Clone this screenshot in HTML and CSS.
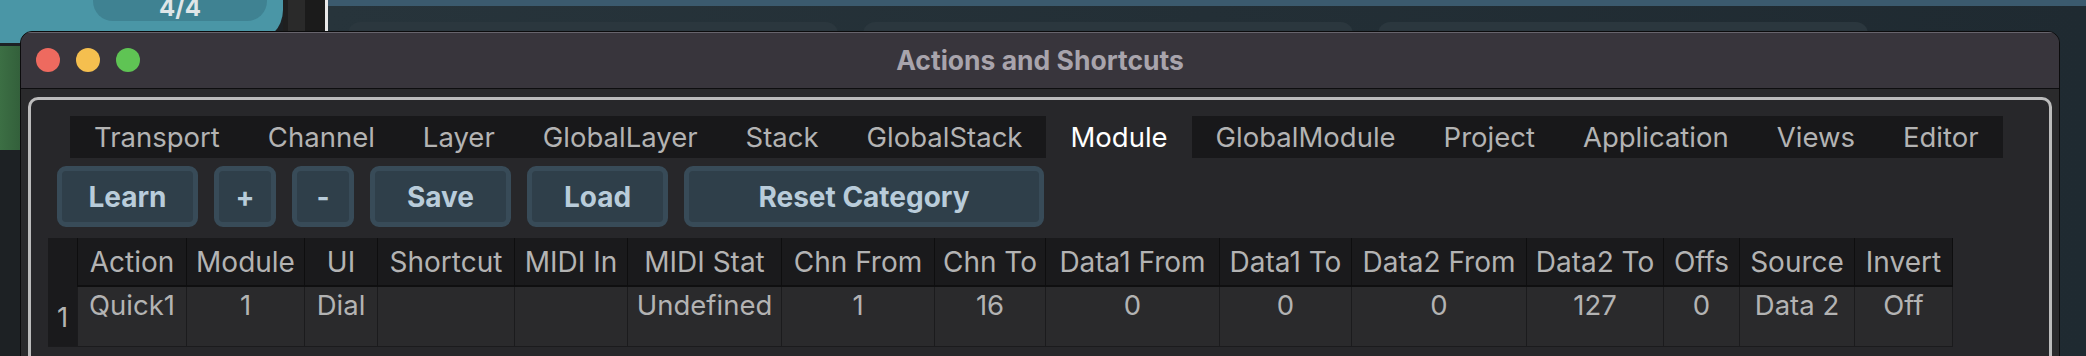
FILE: index.html
```html
<!DOCTYPE html>
<html lang="en">
<head>
  <meta charset="UTF-8">
  <title>Actions and Shortcuts</title>
  <link rel="stylesheet" href="styles.css">
</head>
<body>
  <div class="app">
    <aside class="side">
      <div class="meter"><div class="pill">4/4</div></div>
      <div class="track"></div>
    </aside>
    <div class="rail">
      <div class="rail-a"></div>
      <div class="rail-b"></div>
      <div class="rail-c"></div>
      <div class="rail-d"></div>
    </div>
    <main class="stage">
      <div class="stage-top"></div>
      <div class="cards">
        <div class="card"></div>
        <div class="card"></div>
        <div class="card"></div>
      </div>
    </main>
  </div>

  <div class="window">
    <div class="titlebar">
      <div class="lights">
        <span class="light red"></span>
        <span class="light yellow"></span>
        <span class="light green"></span>
      </div>
      <div class="title">Actions and Shortcuts</div>
      <div></div>
    </div>

    <div class="body">
      <div class="panel">
        <nav class="tabs">
          <span class="tab">Transport</span>
          <span class="tab">Channel</span>
          <span class="tab">Layer</span>
          <span class="tab">GlobalLayer</span>
          <span class="tab">Stack</span>
          <span class="tab">GlobalStack</span>
          <span class="tab active">Module</span>
          <span class="tab">GlobalModule</span>
          <span class="tab">Project</span>
          <span class="tab">Application</span>
          <span class="tab">Views</span>
          <span class="tab">Editor</span>
        </nav>

        <div class="toolbar">
          <button class="btn">Learn</button>
          <button class="btn small">+</button>
          <button class="btn small">-</button>
          <button class="btn">Save</button>
          <button class="btn">Load</button>
          <button class="btn wide">Reset Category</button>
        </div>

        <div class="sheet">
          <div class="th corner"></div>
          <div class="th">Action</div>
          <div class="th">Module</div>
          <div class="th">UI</div>
          <div class="th">Shortcut</div>
          <div class="th">MIDI In</div>
          <div class="th">MIDI Stat</div>
          <div class="th">Chn From</div>
          <div class="th">Chn To</div>
          <div class="th">Data1 From</div>
          <div class="th">Data1 To</div>
          <div class="th">Data2 From</div>
          <div class="th">Data2 To</div>
          <div class="th">Offs</div>
          <div class="th">Source</div>
          <div class="th">Invert</div>

          <div class="td rownum">1</div>
          <div class="td">Quick1</div>
          <div class="td">1</div>
          <div class="td">Dial</div>
          <div class="td"></div>
          <div class="td"></div>
          <div class="td">Undefined</div>
          <div class="td">1</div>
          <div class="td">16</div>
          <div class="td">0</div>
          <div class="td">0</div>
          <div class="td">0</div>
          <div class="td">127</div>
          <div class="td">0</div>
          <div class="td">Data 2</div>
          <div class="td">Off</div>
        </div>
      </div>
    </div>
  </div>
</body>
</html>
```

FILE: styles.css
```css
* {
  box-sizing: border-box;
}

body {
  margin: 0;
  width: 2086px;
  height: 356px;
  overflow: hidden;
  background-color: #1d2429;
  font-family: "Inter", "Liberation Sans", sans-serif;
  position: relative;
}

/* background app */
.app {
  display: flex;
  height: 356px;
}

.side {
  width: 283px;
  background-color: #1d2124;
}

.meter {
  height: 43px;
  background-color: #4a96a6;
  border-bottom-right-radius: 33px;
  padding-left: 93px;
}

.pill {
  width: 174px;
  height: 21px;
  background-color: #3f8292;
  border-radius: 0 0 20px 20px;
  color: #dfe6e8;
  font-size: 24px;
  font-weight: 700;
  line-height: 20px;
  text-align: center;
  overflow: hidden;
  display: flex;
  align-items: flex-end;
  justify-content: center;
  padding-bottom: 3px;
}

.track {
  margin-top: 3px;
  height: 104px;
  width: 20px;
  background: linear-gradient(to right, #3c6f44, #33603b);
}

.rail {
  display: flex;
}

.rail-a {
  width: 5px;
  background-color: #1f1f1f;
}

.rail-b {
  width: 17px;
  background-color: #2a2a2a;
}

.rail-c {
  width: 20px;
  background-color: #1b1b1b;
}

.rail-d {
  width: 3px;
  background-color: #e9e9e9;
}

.stage {
  flex: 1;
  background: linear-gradient(to right, #27343b, #1f2a31);
}

.stage-top {
  height: 6px;
  background-color: #3b5a6e;
}

.cards {
  display: flex;
  gap: 25px;
  padding: 16px 0 0 20px;
}

.card {
  width: 490px;
  height: 100px;
  border-radius: 12px;
  background-color: #2b373e;
}

/* window */
.window {
  position: absolute;
  left: 20px;
  top: 31px;
  width: 2040px;
  height: 340px;
  border: 1px solid #0b0b0c;
  border-radius: 12px 12px 0 0;
  background-color: #2a2a2c;
  overflow: hidden;
}

.titlebar {
  height: 57px;
  background-color: #38353c;
  border-bottom: 1px solid #0e0e10;
  box-shadow: inset 0 1px 0 #67646c;
  display: grid;
  grid-template-columns: 1fr auto 1fr;
  align-items: center;
}

.lights {
  display: flex;
  gap: 16px;
  padding-left: 15px;
}

.light {
  width: 24px;
  height: 24px;
  border-radius: 50%;
}

.red {
  background-color: #ee6a5f;
}

.yellow {
  background-color: #f5bf4f;
}

.green {
  background-color: #5fc454;
}

.title {
  color: #a8a4ac;
  font-size: 26.5px;
  font-weight: 700;
}

.body {
  padding: 8px 7px 0;
}

.panel {
  border: 3px solid #bcbcbc;
  border-bottom: none;
  border-radius: 10px 10px 0 0;
  background-color: #27272a;
  padding-top: 16px;
  height: 300px;
}

.tabs {
  display: inline-flex;
  margin-left: 39px;
  height: 42px;
  background-color: #18181a;
}

.tab {
  display: flex;
  align-items: center;
  padding: 0 24px;
  color: #b3b3b3;
  font-size: 27.5px;
}

.tab.active {
  background-color: #27272a;
  color: #ffffff;
}

.toolbar {
  display: flex;
  gap: 16px;
  margin: 8px 0 0 26px;
}

.btn {
  width: 141px;
  height: 61px;
  border: 5px solid #384b58;
  border-radius: 9px;
  background-color: #2f3f4a;
  color: #b9ccda;
  font-family: inherit;
  font-size: 28px;
  font-weight: 700;
  padding: 0;
}

.btn.small {
  width: 62px;
}

.btn.wide {
  width: 360px;
}

.sheet {
  display: grid;
  grid-template-columns: 30px 109px 118px 73px 137px 113px 154px 153px 111px 174px 132px 175px 137px 76px 115px 98px;
  margin: 11px 0 0 17px;
  color: #b3b3b3;
  font-size: 27.5px;
}

.th {
  height: 49px;
  background-color: #1a1a1c;
  border-right: 1px solid #0e0e0f;
  border-bottom: 2px solid #0f0f10;
  display: flex;
  align-items: center;
  justify-content: center;
  white-space: nowrap;
  font-size: 28px;
}

.th.corner {
  border-bottom: none;
}

.td {
  height: 60px;
  background-color: #2a2a2c;
  border-right: 1px solid #1b1b1d;
  border-bottom: 1px solid #1b1b1d;
  line-height: 36px;
  text-align: center;
  white-space: nowrap;
}

.td.rownum {
  background-color: #1a1a1c;
  display: flex;
  align-items: center;
  justify-content: center;
}
```
